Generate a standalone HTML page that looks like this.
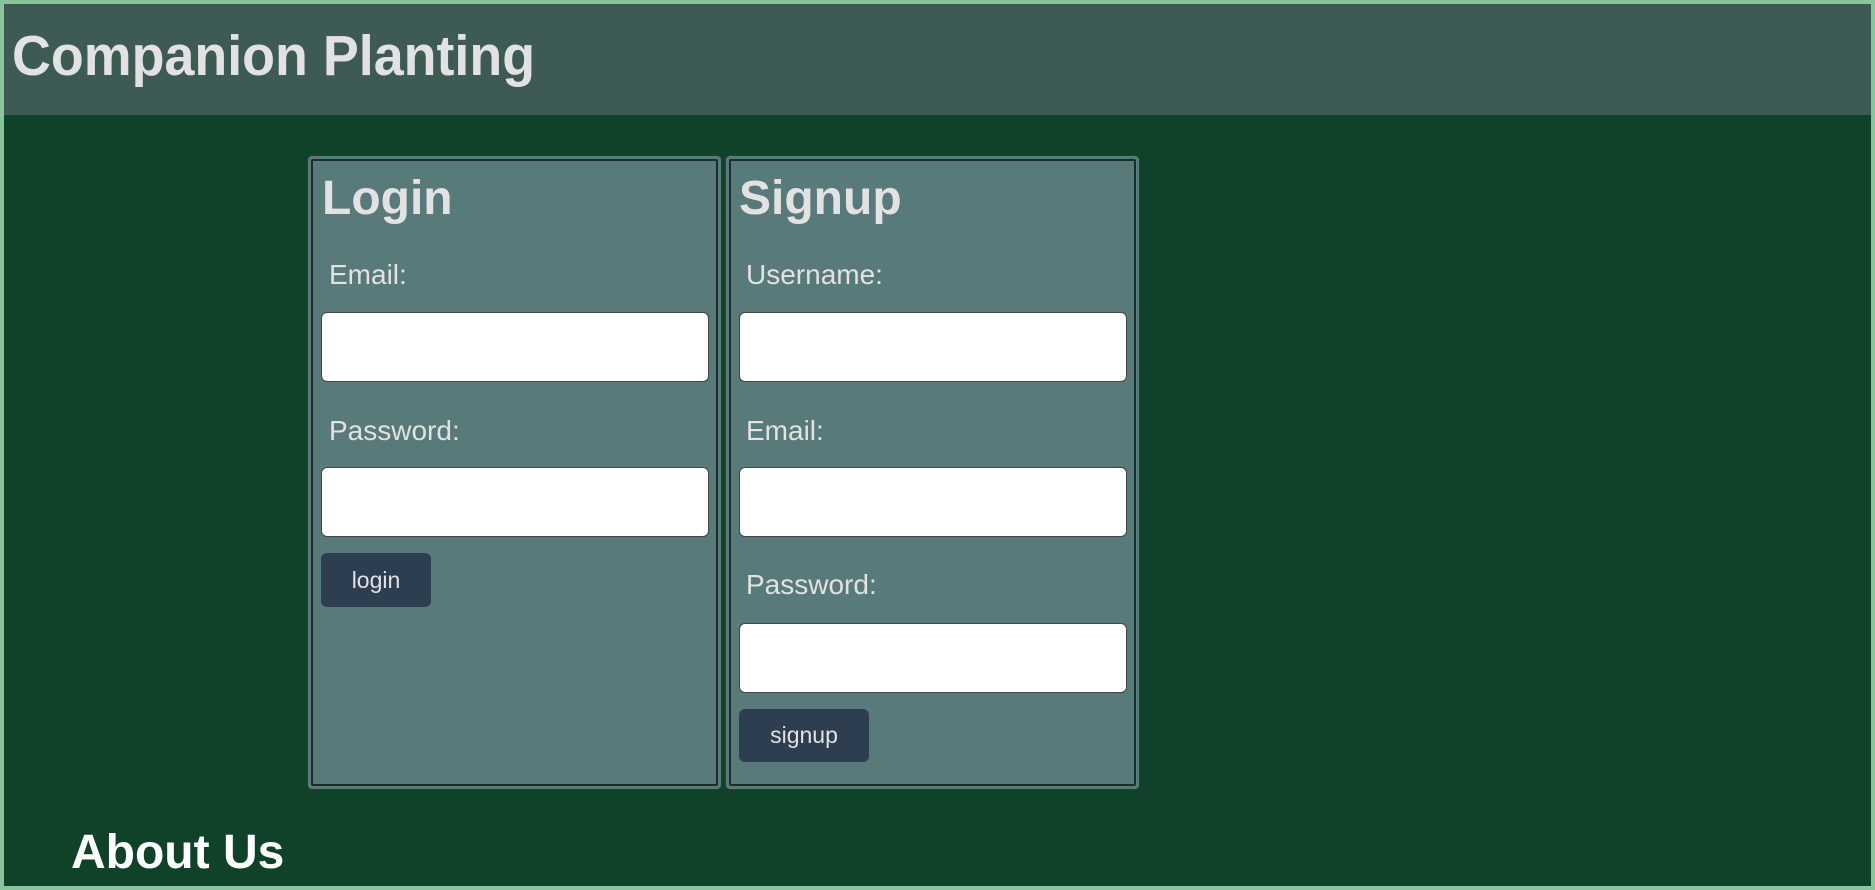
<!DOCTYPE html>
<html><head><meta charset="utf-8"><style>
*{margin:0;padding:0;box-sizing:border-box}
html,body{width:1875px;height:890px;overflow:hidden}
body{background:#8ac49c;font-family:"Liberation Sans",Arial,sans-serif;position:relative}
#main{position:absolute;left:4px;top:4px;width:1867px;height:882px;background:#104129}
#hdr{position:absolute;left:4px;top:4px;width:1867px;height:111px;background:#3d5a55}
.t{position:absolute;line-height:1;white-space:nowrap;color:#e2e2e2}
.box{position:absolute;top:155px;height:635px;background:#587a7a;border:1px solid #2a3b3a;border-radius:5px}
.inner{position:absolute;left:3px;top:3px;right:3px;bottom:3px;border:2px solid #1c2c28;border-radius:2px}
.in{position:absolute;background:#fff;border:1px solid #444;border-radius:6px;height:70px;width:388px}
.btn{position:absolute;background:#2c3e50;border-radius:6px;color:#e2e2e2;font-size:23px;display:flex;align-items:center;justify-content:center}
.lb{font-size:28px}
</style></head><body>
<div id="main"></div>
<div id="hdr"></div>
<div class="t" style="left:12px;top:28px;font-size:57px;font-weight:bold;transform:scaleX(0.944);transform-origin:0 0">Companion Planting</div>

<div class="box" style="left:307px;width:415px"><div class="inner"></div></div>
<div class="box" style="left:725px;width:415px"><div class="inner"></div></div>

<div class="t" style="left:322px;top:175px;font-size:48px;font-weight:bold">Login</div>
<div class="t lb" style="left:329px;top:261px">Email:</div>
<div class="in" style="left:321px;top:312px"></div>
<div class="t lb" style="left:329px;top:417px">Password:</div>
<div class="in" style="left:321px;top:467px"></div>
<div class="btn" style="left:321px;top:553px;width:110px;height:54px">login</div>

<div class="t" style="left:739px;top:175px;font-size:48px;font-weight:bold">Signup</div>
<div class="t lb" style="left:746px;top:261px">Username:</div>
<div class="in" style="left:739px;top:312px"></div>
<div class="t lb" style="left:746px;top:417px">Email:</div>
<div class="in" style="left:739px;top:467px"></div>
<div class="t lb" style="left:746px;top:571px">Password:</div>
<div class="in" style="left:739px;top:623px"></div>
<div class="btn" style="left:739px;top:709px;width:130px;height:53px">signup</div>

<div class="t" style="left:71px;top:829px;font-size:48px;font-weight:bold;color:#fff">About Us</div>
</body></html>
